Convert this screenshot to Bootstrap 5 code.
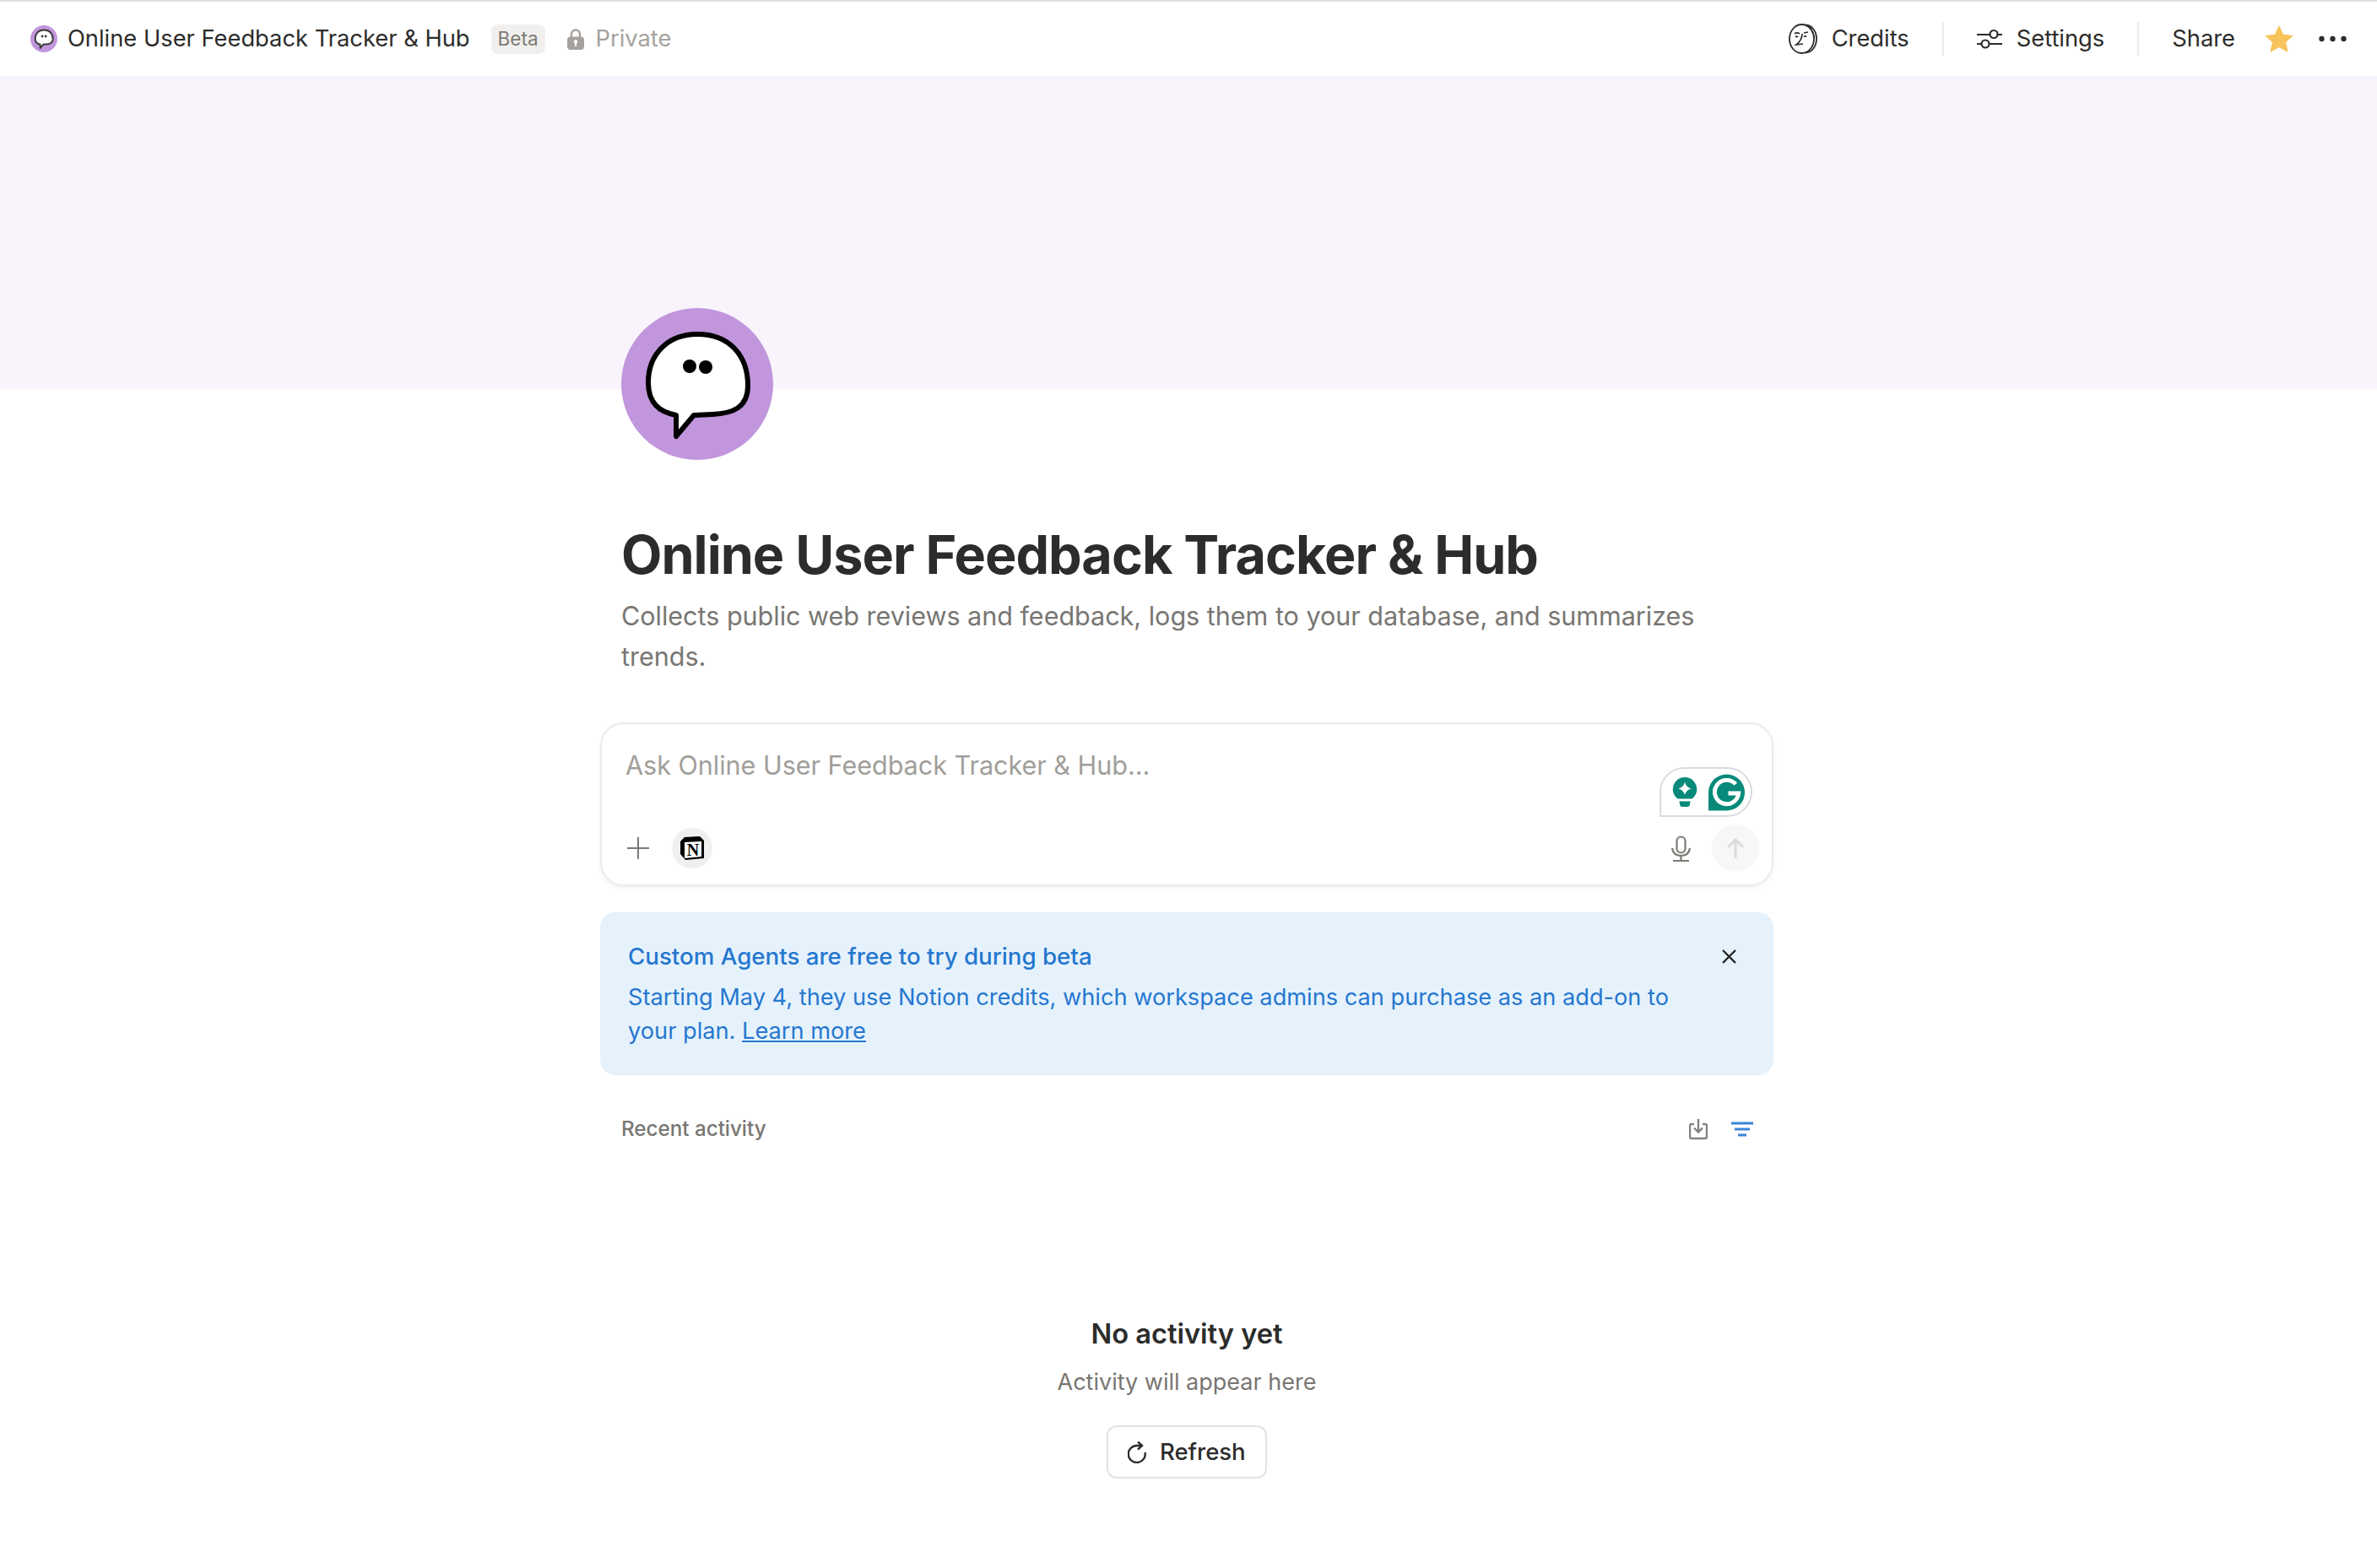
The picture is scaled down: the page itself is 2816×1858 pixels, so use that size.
<!DOCTYPE html>
<html lang="en">

<head>
    <title>Online User Feedback Tracker &amp; Hub</title>
    <meta charset="UTF-8">
    <meta name="viewport" content="width=device-width, initial-scale=1.0">
    <link href="https://cdn.jsdelivr.net/npm/bootstrap@5.3.0/dist/css/bootstrap.min.css" rel="stylesheet">
    <style>
        body {
            font-family: Inter, "Liberation Sans", sans-serif;
            background-color: #fff;
            color: #2c2c2b;
            min-height: 1858px;
        }

        .top-bar {
            height: 90px;
            border-top: 2px solid #e0e0e0;
            padding: 0 36px;
            font-size: 27.300px;
        }

        .app-name {
            margin-left: 12px;
        }

        .beta-tag {
            margin-left: 25px;
            height: 35px;
            padding: 0 8px;
            font-size: 22.500px;
            color: #7d7a75;
            background: #f1f0ee;
            border-radius: 8px;
        }

        .private-tag {
            margin-left: 26px;
            color: #a5a29d;
            gap: 14px;
        }

        .bar-item {
            gap: 17px;
        }

        .bar-sep {
            width: 2px;
            height: 40px;
            background: #ecebea;
            margin: 0 39px;
        }

        .star-icon {
            margin-left: 35px;
        }

        .more-icon {
            margin-left: 30px;
        }

        .cover-band {
            height: 371px;
            background: #f9f4fb;
        }

        .page-column {
            width: 1390px;
            margin-left: 711px;
        }

        .page-head {
            padding: 0 25px;
        }

        .agent-avatar {
            display: block;
            width: 180px;
            height: 180px;
            margin-top: -96px;
            position: relative;
        }

        .agent-title {
            margin: 74px 0 0;
            font-size: 62.800px;
            line-height: 76px;
            font-weight: 700;
            letter-spacing: -0.950px;
        }

        .agent-desc {
            margin: 11px 0 0;
            font-size: 30.500px;
            line-height: 48px;
            color: #787672;
        }

        .ask-box {
            height: 194px;
            margin-top: 54px;
            border: 2px solid #ecebea;
            border-radius: 28px;
            box-shadow: 0 3px 6px rgba(0, 0, 0, 0.05);
            padding: 29px 15px 15px 28px;
        }

        .ask-hint {
            font-size: 30.500px;
            line-height: 40px;
            color: #a09e9a;
        }

        .ask-tools {
            gap: 27px;
            padding-left: 2px;
        }

        .round-btn {
            border-radius: 50%;
        }

        .notion-btn {
            width: 48px;
            height: 48px;
            background: #f0efed;
        }

        .send-btn {
            width: 56px;
            height: 56px;
            background: #f7f7f7;
            margin-left: 25px;
        }

        .grammarly-chip {
            position: absolute;
            left: 1253px;
            top: 51px;
            width: 110px;
            height: 59px;
            background: #fff;
            border: 2px solid #d8dce0;
            border-radius: 30px 30px 30px 0;
            gap: 13px;
            padding-left: 13px;
        }

        .notice-box {
            height: 193px;
            margin-top: 31px;
            padding: 34px 100px 0 33px;
            background: #e5f2fc;
            border-radius: 18px;
            color: #2577cf;
            font-size: 27.200px;
            line-height: 40px;
        }

        .notice-box a {
            color: #2577cf;
        }

        .notice-head {
            font-size: 27.700px;
            font-weight: 500;
            margin-bottom: 11px;
            line-height: 36px;
        }

        .notice-close {
            top: 44px;
            right: 44px;
        }

        .activity-head {
            margin-top: 44px;
            padding: 0 24px 0 25px;
            height: 40px;
            font-size: 24.200px;
            font-weight: 500;
            color: #787672;
        }

        .activity-tools {
            gap: 28px;
        }

        .empty-state {
            margin-top: 200px;
        }

        .empty-title {
            font-size: 32.600px;
            line-height: 44px;
            font-weight: 600;
            margin: 0;
        }

        .empty-sub {
            font-size: 27px;
            line-height: 40px;
            margin: 16px 0 0;
            color: #787672;
        }

        .refresh-btn {
            margin-top: 31px;
            width: 190px;
            height: 63px;
            padding: 0 0 0 23px;
            gap: 16px;
            font-size: 27.500px;
            font-weight: 500;
            color: #2c2c2b;
            background: #fff;
            border: 2px solid #e4e3e1;
            border-radius: 12px;
        }
    </style>
</head>

<body>
    <header class="top-bar d-flex align-items-center">
        <svg width="32" height="32" viewBox="0 0 180 180">
            <circle cx="90" cy="90" r="90" fill="#c196dc"/>
            <path d="M90 31C128 31 150 56 150 92C150 118 132 125 108 126L86 127L65 152V127C45 123 32 113 32 88C32 55 55 31 90 31z" fill="#fff" stroke="#3c3c3c" stroke-width="11" stroke-linejoin="round"/>
            <circle cx="79" cy="73" r="8" fill="#3c3c3c"/>
            <circle cx="102" cy="73" r="8" fill="#3c3c3c"/>
        </svg>
        <span class="app-name">Online User Feedback Tracker &amp; Hub</span>
        <span class="beta-tag d-flex align-items-center">Beta</span>
        <span class="private-tag d-flex align-items-center">
            <svg width="20" height="25" viewBox="0 0 20 25">
                <path d="M5 11V6.500a5 5 0 0 1 10 0V11" fill="none" stroke="#a5a29d" stroke-width="2.400"/>
                <rect x="0" y="9.500" width="20" height="15.500" rx="4" fill="#a5a29d"/>
                <circle cx="10" cy="15.500" r="2.200" fill="#fff"/>
                <rect x="9" y="16" width="2" height="5" fill="#fff"/>
            </svg>
            Private
        </span>
        <div class="d-flex align-items-center ms-auto">
            <span class="bar-item d-flex align-items-center">
                <svg width="34" height="36" viewBox="0 0 34 36" fill="none" stroke="#2c2c2b" stroke-width="1.800">
                    <ellipse cx="15.500" cy="18" rx="14.500" ry="17"/>
                    <path d="M20 1.500c8 .5 13 8 13 16.500s-5 16-13 16.500"/>
                    <path d="M25 5c3 3 5 8 5 13" stroke-dasharray="3 2"/>
                    <path d="M7 12c2-1.500 4-1.500 6 0M18 11l5-1M16 12c0 4-2 9-7 13l8-1M8 16c1-1 2-1 3 0M18 15.500c1-.8 2-.8 3 0" stroke-width="1.700"/>
                </svg>
                Credits
            </span>
            <span class="bar-sep"></span>
            <span class="bar-item d-flex align-items-center">
                <svg width="30" height="25" viewBox="0 0 30 25" fill="none" stroke="#2c2c2b" stroke-width="2.200">
                    <path d="M0 7h15M25 7h5M0 18h5M15 18h15"/>
                    <circle cx="20" cy="6.500" r="4.500"/>
                    <circle cx="10" cy="18" r="4.500"/>
                </svg>
                Settings
            </span>
            <span class="bar-sep"></span>
            <span>Share</span>
            <svg class="star-icon" width="34" height="32" viewBox="0 0 32 30">
                <path d="M16 0l4.800 10 11.200 1.300-8.300 7.500 2.300 11.200L16 24.500 6 30l2.300-11.200L0 11.300 11.200 10z" fill="#f8c35a"/>
            </svg>
            <svg class="more-icon" width="33" height="8" viewBox="0 0 33 8" fill="#2c2c2b">
                <circle cx="3.500" cy="4" r="3.200"/>
                <circle cx="16.500" cy="4" r="3.200"/>
                <circle cx="29.500" cy="4" r="3.200"/>
            </svg>
        </div>
    </header>

    <div class="cover-band"></div>

    <main class="page-column">
        <div class="page-head">
            <svg class="agent-avatar" viewBox="0 0 180 180">
                <circle cx="90" cy="90" r="90" fill="#c196dc"/>
                <path d="M90 31C128 31 150 56 150 92C150 118 132 125 108 126L86 127L65 152V127C45 123 32 113 32 88C32 55 55 31 90 31z" fill="#fff" stroke="#000" stroke-width="6" stroke-linejoin="round"/>
                <circle cx="81" cy="69" r="8" fill="#000"/>
                <circle cx="100" cy="70" r="8" fill="#000"/>
            </svg>
            <h1 class="agent-title">Online User Feedback Tracker &amp; Hub</h1>
            <p class="agent-desc">Collects public web reviews and feedback, logs them to your database, and summarizes trends.</p>
        </div>

        <section class="ask-box position-relative d-flex flex-column justify-content-between">
            <div class="ask-hint">Ask Online User Feedback Tracker &amp; Hub...</div>
            <div class="d-flex align-items-center justify-content-between">
                <div class="ask-tools d-flex align-items-center">
                    <svg width="26" height="26" viewBox="0 0 26 26" stroke="#7d7a75" stroke-width="2">
                        <path d="M13 0v26M0 13h26"/>
                    </svg>
                    <span class="round-btn notion-btn d-flex align-items-center justify-content-center">
                        <svg width="28" height="28" viewBox="0 0 28 28">
                            <path d="M0 6l5-5 18-1 5 5v21l-22 2-6-7z" fill="#000"/>
                            <path d="M5 7l20-1v18L5 26z" fill="#fff"/>
                            <text x="15" y="23" text-anchor="middle" font-family="Liberation Serif" font-weight="700" font-size="20" fill="#000">N</text>
                        </svg>
                    </span>
                </div>
                <div class="d-flex align-items-center">
                    <svg width="23" height="31" viewBox="0 0 23 31" fill="none" stroke="#7d7a75" stroke-width="2.200">
                        <rect x="6.500" y="1.500" width="10" height="19" rx="5"/>
                        <path d="M1 15c1 7 6 9 10.500 9s9.500-2 10.500-9M11.500 24v6M2 30h19"/>
                    </svg>
                    <span class="round-btn send-btn d-flex align-items-center justify-content-center">
                        <svg width="20" height="24" viewBox="0 0 20 24" fill="none" stroke="#dcdbda" stroke-width="3">
                            <path d="M10 24V2M1 11l9-9 9 9"/>
                        </svg>
                    </span>
                </div>
            </div>
            <div class="grammarly-chip d-flex align-items-center">
                <svg width="30" height="36" viewBox="0 0 30 38">
                    <path d="M15 0a15 15 0 0 1 15 15c0 6-3 9-6 12H6C3 24 0 21 0 15A15 15 0 0 1 15 0z" fill="#078a7a"/>
                    <path d="M8 30h14l-1 5q-1 2-3 2h-6q-2 0-3-2z" fill="#078a7a"/>
                    <path d="M15 6q2 7 8 8-6 2-8 8-2-6-8-8 6-1 8-8z" fill="#fff"/>
                </svg>
                <svg width="43" height="44" viewBox="0 0 44 44">
                    <path d="M22 0a22 22 0 1 1 0 44H0V22A22 22 0 0 1 22 0z" fill="#078a7a"/>
                    <path d="M33 12a14.500 14.500 0 1 0 3.500 11H24" fill="none" stroke="#fff" stroke-width="5"/>
                </svg>
            </div>
        </section>

        <section class="notice-box position-relative">
            <div class="notice-head">Custom Agents are free to try during beta</div>
            <div>Starting May 4, they use Notion credits, which workspace admins can purchase as an add-on to your plan. <a href="#">Learn more</a></div>
            <svg class="notice-close position-absolute" width="17" height="17" viewBox="0 0 17 17" stroke="#222" stroke-width="2.400">
                <path d="M1 1l15 15M16 1L1 16"/>
            </svg>
        </section>

        <div class="activity-head d-flex align-items-center justify-content-between">
            <span>Recent activity</span>
            <div class="activity-tools d-flex align-items-center">
                <svg width="22" height="25" viewBox="0 0 22 25" fill="none" stroke="#85827e" stroke-width="2.400">
                    <path d="M6 6H3q-2 0-2 2v13q0 2 2 2h16q2 0 2-2V8q0-2-2-2h-3"/>
                    <path d="M11 0v15M6 10.500l5 5 5-5"/>
                </svg>
                <svg width="26" height="18" viewBox="0 0 26 18" stroke="#3a85d8" stroke-width="2.800">
                    <path d="M0 2h26M4 9h18M8 16h10"/>
                </svg>
            </div>
        </div>

        <div class="empty-state d-flex flex-column align-items-center">
            <h2 class="empty-title">No activity yet</h2>
            <p class="empty-sub">Activity will appear here</p>
            <button type="button" class="btn refresh-btn d-flex align-items-center">
                <svg width="22" height="26" viewBox="0 0 22 26" fill="none" stroke="#2c2c2b" stroke-width="2.400">
                    <path d="M20.500 13A10 10 0 1 1 11 5H16.500"/>
                    <path d="M12 0.500l5 4.500-5 4.500"/>
                </svg>
                Refresh
            </button>
        </div>
    </main>

    <script src="https://cdn.jsdelivr.net/npm/bootstrap@5.3.0/dist/js/bootstrap.bundle.min.js"></script>
</body>

</html>
